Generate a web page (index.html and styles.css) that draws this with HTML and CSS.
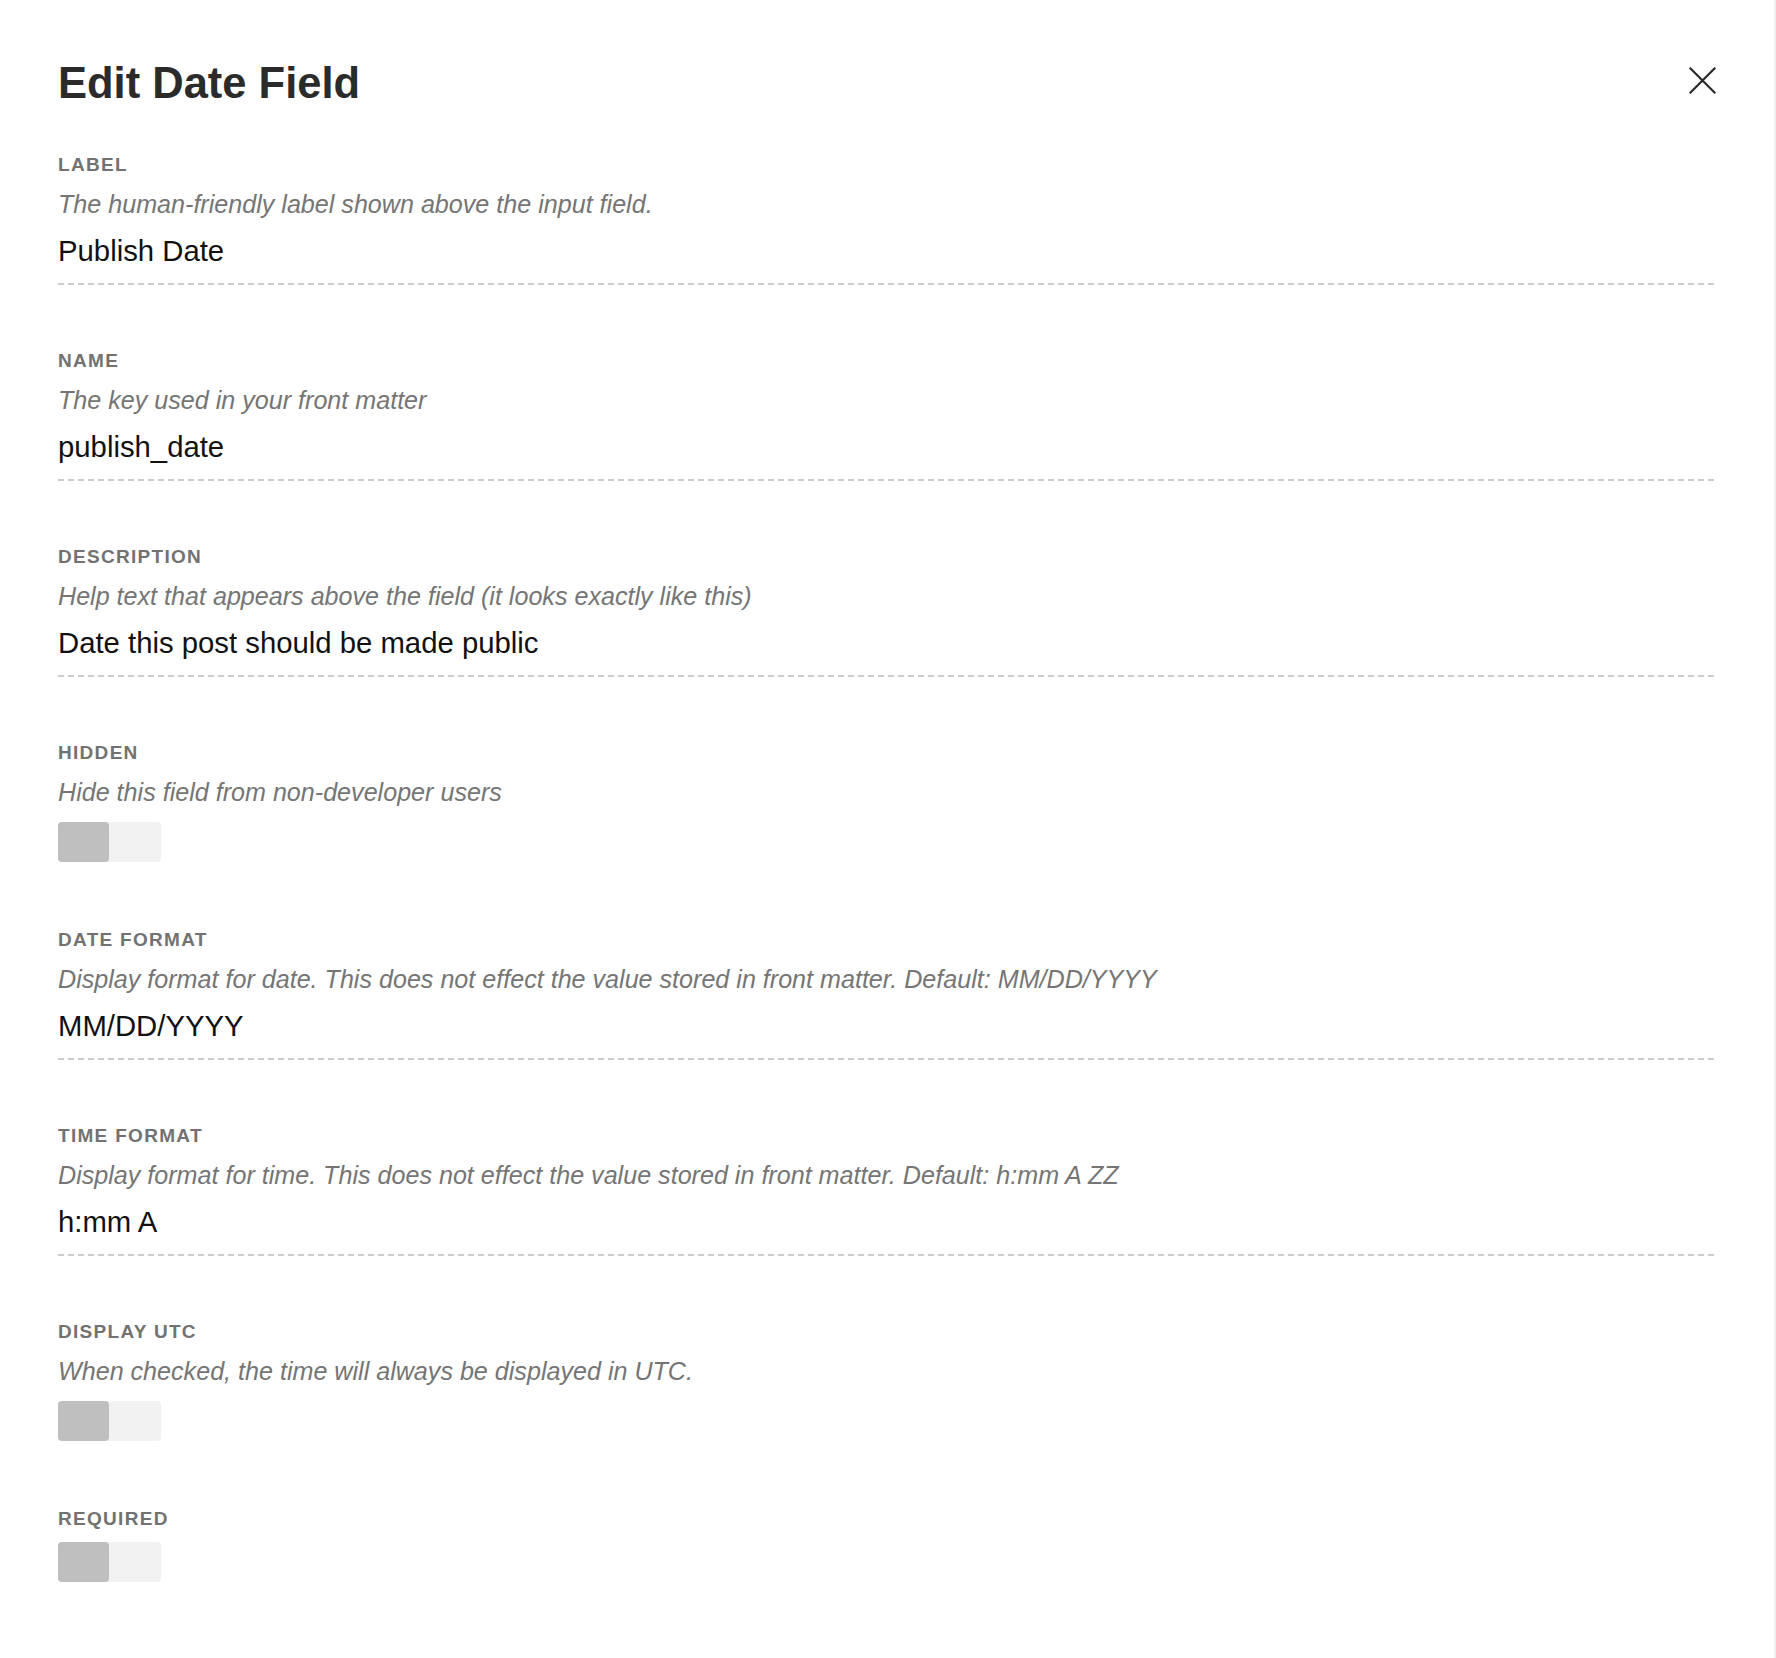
FILE: index.html
```html
<!DOCTYPE html>
<html lang="en">
<head>
<meta charset="utf-8">
<title>Edit Date Field</title>
<link rel="stylesheet" href="styles.css">
</head>
<body>
<div class="panel">
  <header class="panel-header">
    <h1 class="panel-title">Edit Date Field</h1>
    <button class="close-btn" type="button" aria-label="Close">
      <svg width="27" height="27" viewBox="0 0 27 27" fill="none" stroke="#2a2a2a" stroke-width="2.2" stroke-linecap="square">
        <path d="M1.5 1.5 L25.5 25.5 M25.5 1.5 L1.5 25.5"/>
      </svg>
    </button>
  </header>

  <div class="field">
    <div class="field-label">Label</div>
    <div class="field-desc">The human-friendly label shown above the input field.</div>
    <div class="field-input">Publish Date</div>
  </div>

  <div class="field">
    <div class="field-label">Name</div>
    <div class="field-desc">The key used in your front matter</div>
    <div class="field-input">publish_date</div>
  </div>

  <div class="field">
    <div class="field-label">Description</div>
    <div class="field-desc">Help text that appears above the field (it looks exactly like this)</div>
    <div class="field-input">Date this post should be made public</div>
  </div>

  <div class="field field-toggle">
    <div class="field-label">Hidden</div>
    <div class="field-desc">Hide this field from non-developer users</div>
    <div class="toggle toggle-after-desc"><span class="toggle-knob"></span></div>
  </div>

  <div class="field">
    <div class="field-label">Date Format</div>
    <div class="field-desc">Display format for date. This does not effect the value stored in front matter. Default: MM/DD/YYYY</div>
    <div class="field-input">MM/DD/YYYY</div>
  </div>

  <div class="field">
    <div class="field-label">Time Format</div>
    <div class="field-desc">Display format for time. This does not effect the value stored in front matter. Default: h:mm A ZZ</div>
    <div class="field-input">h:mm A</div>
  </div>

  <div class="field field-toggle">
    <div class="field-label">Display UTC</div>
    <div class="field-desc">When checked, the time will always be displayed in UTC.</div>
    <div class="toggle toggle-after-desc"><span class="toggle-knob"></span></div>
  </div>

  <div class="field field-toggle">
    <div class="field-label">Required</div>
    <div class="toggle toggle-after-label"><span class="toggle-knob"></span></div>
  </div>
</div>
</body>
</html>
```

FILE: styles.css
```css
* {
  box-sizing: border-box;
}

html, body {
  margin: 0;
  padding: 0;
  background: #ffffff;
}

body {
  font-family: "Liberation Sans", Arial, sans-serif;
  color: #111111;
}

.panel {
  min-height: 100vh;
  padding: 59px 58px 40px 58px;
  border-right: 2px solid #efefef;
}

.panel-header {
  display: flex;
  justify-content: space-between;
  align-items: flex-start;
  margin-bottom: 48px;
}

.panel-title {
  margin: 0;
  font-size: 43.5px;
  line-height: 48px;
  font-weight: 700;
  color: #2b2b2b;
}

.close-btn {
  margin: 8px 0 0 0;
  padding: 0;
  border: 0;
  background: none;
  width: 27px;
  height: 27px;
  display: block;
  cursor: pointer;
}

.close-btn svg {
  display: block;
}

.field {
  margin-bottom: 66px;
}

.field-toggle {
  margin-bottom: 68px;
}

.field-label {
  font-size: 19px;
  line-height: 20px;
  font-weight: 700;
  letter-spacing: 1.3px;
  text-transform: uppercase;
  color: #727272;
  margin-bottom: 14px;
}

.field-desc {
  font-size: 25.12px;
  line-height: 30px;
  font-style: italic;
  color: #757575;
  margin-bottom: 15px;
}

.field-input {
  font-size: 29.3px;
  line-height: 34px;
  color: #111111;
  padding-bottom: 15px;
  background-image: repeating-linear-gradient(to right, #cccccc 0, #cccccc 6px, transparent 6px, transparent 10px);
  background-size: 100% 2px;
  background-position: left bottom;
  background-repeat: no-repeat;
  border-bottom: 2px solid transparent;
  background-origin: border-box;
}

.toggle {
  width: 103px;
  height: 40px;
  border-radius: 4px;
  background: #f2f2f2;
  display: flex;
}

.toggle-after-desc {
  margin-top: 7px;
}

.toggle-after-label {
  margin-top: -1px;
}

.toggle-knob {
  width: 51px;
  height: 40px;
  border-radius: 4px;
  background: #bfbfbf;
}
```
